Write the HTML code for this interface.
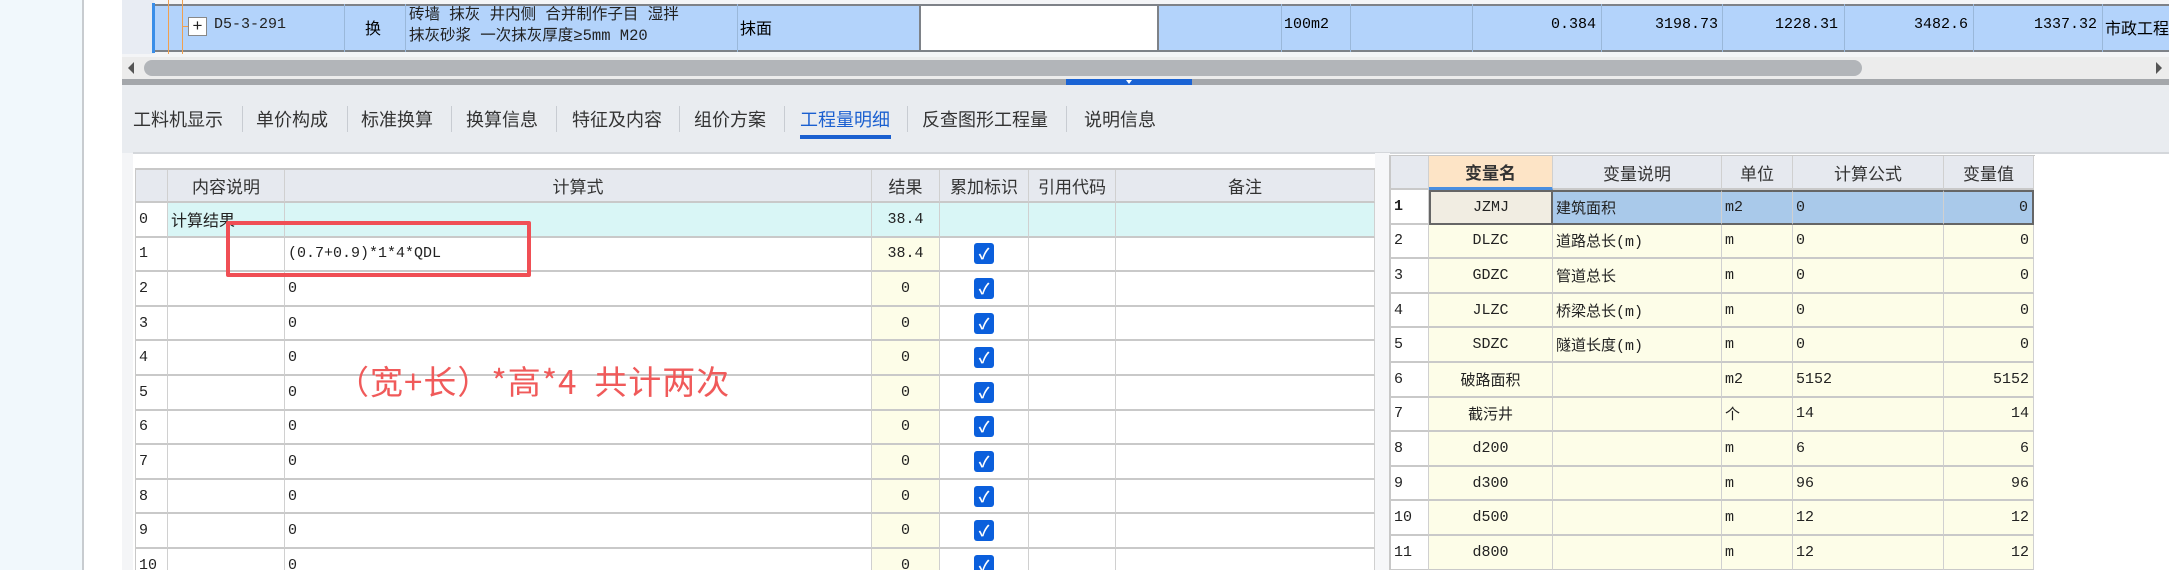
<!DOCTYPE html>
<html><head><meta charset="utf-8"><style>
*{margin:0;padding:0;box-sizing:border-box}
html{width:2169px;height:570px;overflow:hidden}
body{width:2169px;height:570px;overflow:hidden;background:#fff;position:relative;font-family:"Liberation Sans","Noto Sans CJK SC",sans-serif;}
.a{position:absolute}
.cj{font-family:"Liberation Mono","Noto Sans CJK SC",monospace;}
.wrap{position:absolute;overflow:hidden}
.grid{display:grid;position:absolute}
.grid>div{border-right:1px solid #d0d0d0;border-bottom:2px solid #c9c9c9;display:flex;align-items:center;font-size:15px;color:#222;white-space:nowrap;overflow:hidden;font-family:"Liberation Mono","Noto Sans CJK SC",monospace}
.c{justify-content:center}.r{justify-content:flex-end;padding-right:4px}.l{padding-left:3px}
.hd{background:#e6e9ef;font-family:"Liberation Sans","Noto Sans CJK SC",sans-serif!important;font-size:17px!important;color:#333!important}
.cb{width:20px;height:21px;background:#0b5fdc;border-radius:3px;color:#fff;font-size:15px;display:flex;align-items:center;justify-content:center;font-weight:bold}
.y{background:#fdfde8}
.tab{position:absolute;top:106px;font-size:18px;color:#333}
.sep{position:absolute;top:106px;width:1px;height:26px;background:#c8ccd2}
</style></head><body>
<div class="a" style="left:0;top:0;width:82px;height:570px;background:#f1f8fc"></div>
<div class="a" style="left:82px;top:0;width:2px;height:570px;background:#c8ccd0"></div>
<div class="a" style="left:122px;top:0;width:2047px;height:57px;background:#f4f5f7"></div>
<div class="a" style="left:122px;top:0;width:32px;height:54px;background:#e8ecf3"></div>
<div class="a" style="left:154px;top:4px;width:2015px;height:48px;background:#b3d3fb;border-top:2px solid #7e8288;border-bottom:2px solid #7e8288"></div>
<div class="a" style="left:152px;top:3px;width:3px;height:50px;background:#3a8ee8"></div>
<div class="a" style="left:168px;top:0;width:1px;height:54px;background:#f0a050"></div>
<div class="a" style="left:182px;top:0;width:1px;height:54px;background:#f0a050"></div>
<div class="a" style="left:182px;top:26px;width:6px;height:1px;background:#f0a050"></div>
<div class="a" style="left:188px;top:17px;width:19px;height:19px;background:#fff;border:1px solid #888;font-size:17px;line-height:16px;text-align:center;color:#222">+</div>
<div class="a cj" style="left:214px;top:16px;font-size:15px;color:#222">D5-3-291</div>
<div class="a" style="left:344px;top:4px;width:1px;height:48px;background:#9ab8da"></div>
<div class="a cj" style="left:365px;top:15px;font-size:16px">换</div>
<div class="a" style="left:405px;top:4px;width:1px;height:48px;background:#9ab8da"></div>
<div class="a cj" style="left:409px;top:5px;font-size:15.5px;line-height:21px;color:#222">砖墙 抹灰 井内侧 合并制作子目 湿拌<br>抹灰砂浆 一次抹灰厚度≥5mm M20</div>
<div class="a" style="left:737px;top:4px;width:1px;height:48px;background:#9ab8da"></div>
<div class="a cj" style="left:740px;top:15px;font-size:16px">抹面</div>
<div class="a" style="left:919px;top:6px;width:240px;height:44px;background:#fff;border-left:2px solid #7e8288;border-right:2px solid #7e8288"></div>
<div class="a" style="left:1281px;top:4px;width:1px;height:48px;background:#9ab8da"></div>
<div class="a" style="left:1350px;top:4px;width:1px;height:48px;background:#9ab8da"></div>
<div class="a" style="left:1472px;top:4px;width:1px;height:48px;background:#9ab8da"></div>
<div class="a" style="left:1601px;top:4px;width:1px;height:48px;background:#9ab8da"></div>
<div class="a" style="left:1722px;top:4px;width:1px;height:48px;background:#9ab8da"></div>
<div class="a" style="left:1844px;top:4px;width:1px;height:48px;background:#9ab8da"></div>
<div class="a" style="left:1973px;top:4px;width:1px;height:48px;background:#9ab8da"></div>
<div class="a" style="left:2102px;top:4px;width:1px;height:48px;background:#9ab8da"></div>
<div class="a cj" style="left:1284px;top:16px;font-size:15px">100m2</div>
<div class="a cj" style="left:1500px;width:96px;text-align:right;top:16px;font-size:15px">0.384</div>
<div class="a cj" style="left:1620px;width:98px;text-align:right;top:16px;font-size:15px">3198.73</div>
<div class="a cj" style="left:1740px;width:98px;text-align:right;top:16px;font-size:15px">1228.31</div>
<div class="a cj" style="left:1870px;width:98px;text-align:right;top:16px;font-size:15px">3482.6</div>
<div class="a cj" style="left:1999px;width:98px;text-align:right;top:16px;font-size:15px">1337.32</div>
<div class="a cj" style="left:2105px;top:15px;font-size:16px;white-space:nowrap">市政工程</div>
<div class="a" style="left:122px;top:57px;width:2047px;height:22px;background:#ececec"></div>
<div class="a" style="left:128px;top:62px;width:0;height:0;border-top:6px solid transparent;border-bottom:6px solid transparent;border-right:6px solid #555"></div>
<div class="a" style="left:144px;top:60px;width:1718px;height:16px;background:#b2b5b9;border-radius:8px"></div>
<div class="a" style="left:2156px;top:62px;width:0;height:0;border-top:6px solid transparent;border-bottom:6px solid transparent;border-left:6px solid #555"></div>
<div class="a" style="left:122px;top:79px;width:2047px;height:6px;background:#a4a7ab"></div>
<div class="a" style="left:1066px;top:79px;width:126px;height:6px;background:#1a63d4"></div>
<div class="a" style="left:1126px;top:80px;width:0;height:0;border-left:3px solid transparent;border-right:3px solid transparent;border-top:4px solid #fff"></div>
<div class="a" style="left:122px;top:85px;width:2047px;height:68px;background:#e9ecf0"></div>
<div class="a" style="left:122px;top:153px;width:11px;height:417px;background:#f4f5f7"></div>
<div class="a" style="left:133px;top:152px;width:2036px;height:2px;background:#d4d7db"></div>
<div class="tab" style="left:133px">工料机显示</div><div class="sep" style="left:242px"></div>
<div class="tab" style="left:256px">单价构成</div><div class="sep" style="left:347px"></div>
<div class="tab" style="left:361px">标准换算</div><div class="sep" style="left:451px"></div>
<div class="tab" style="left:466px">换算信息</div><div class="sep" style="left:556px"></div>
<div class="tab" style="left:572px">特征及内容</div><div class="sep" style="left:679px"></div>
<div class="tab" style="left:694px">组价方案</div><div class="sep" style="left:784px"></div>
<div class="tab" style="left:800px;color:#1a5fd0">工程量明细</div><div class="sep" style="left:907px"></div>
<div class="a" style="left:800px;top:135px;width:91px;height:4px;background:#1a5fd0"></div>
<div class="tab" style="left:922px">反查图形工程量</div><div class="sep" style="left:1066px"></div>
<div class="tab" style="left:1084px">说明信息</div>
<div class="wrap" style="left:135px;top:168px;width:1240px;height:402px;border-left:1px solid #c8c8c8;border-top:2px solid #c8c8c8">
<div class="grid" style="left:0;top:0;grid-template-columns:32px 117px 587px 68px 89px 87px 259px;grid-template-rows:33px repeat(11,34.6px)">
<div class="hd"></div><div class="hd c">内容说明</div><div class="hd c">计算式</div><div class="hd c">结果</div><div class="hd c">累加标识</div><div class="hd c">引用代码</div><div class="hd c">备注</div>
<div class="l">0</div><div class="l" style="background:#d9f6f6;font-family:'Noto Sans CJK SC',sans-serif;font-size:16px">计算结果</div><div style="background:#d9f6f6"></div><div class="c" style="background:#d9f6f6">38.4</div><div style="background:#d9f6f6"></div><div style="background:#d9f6f6"></div><div style="background:#d9f6f6"></div>
<div class="l">1</div><div></div><div class="l">(0.7+0.9)*1*4*QDL</div><div class="c y">38.4</div><div class="c"><span class="cb">✓</span></div><div></div><div></div>
<div class="l">2</div><div></div><div class="l">0</div><div class="c y">0</div><div class="c"><span class="cb">✓</span></div><div></div><div></div>
<div class="l">3</div><div></div><div class="l">0</div><div class="c y">0</div><div class="c"><span class="cb">✓</span></div><div></div><div></div>
<div class="l">4</div><div></div><div class="l">0</div><div class="c y">0</div><div class="c"><span class="cb">✓</span></div><div></div><div></div>
<div class="l">5</div><div></div><div class="l">0</div><div class="c y">0</div><div class="c"><span class="cb">✓</span></div><div></div><div></div>
<div class="l">6</div><div></div><div class="l">0</div><div class="c y">0</div><div class="c"><span class="cb">✓</span></div><div></div><div></div>
<div class="l">7</div><div></div><div class="l">0</div><div class="c y">0</div><div class="c"><span class="cb">✓</span></div><div></div><div></div>
<div class="l">8</div><div></div><div class="l">0</div><div class="c y">0</div><div class="c"><span class="cb">✓</span></div><div></div><div></div>
<div class="l">9</div><div></div><div class="l">0</div><div class="c y">0</div><div class="c"><span class="cb">✓</span></div><div></div><div></div>
<div class="l">10</div><div></div><div class="l">0</div><div class="c y">0</div><div class="c"><span class="cb">✓</span></div><div></div><div></div>
</div></div>
<div class="a" style="left:226px;top:221px;width:305px;height:56px;border:4px solid #f04f55;border-radius:2px"></div>
<div class="a" style="left:336px;top:356px;font-size:33px;color:#f05a5a;white-space:pre;font-family:'Noto Sans CJK SC',sans-serif;letter-spacing:1px">（宽+长）*高*4  共计两次</div>
<div class="a" style="left:1375px;top:153px;width:15px;height:417px;background:#f6f7f9"></div>
<div class="wrap" style="left:1389px;top:155px;width:646px;height:415px;border-left:2px solid #c8c8c8;border-top:1px solid #c8c8c8">
<div class="grid" style="left:0;top:0;grid-template-columns:38px 124px 169px 71px 151px 90px;grid-template-rows:34px repeat(11,34.6px)">
<div class="hd"></div><div class="hd c" style="background:#fde4c6;font-weight:bold;border-bottom:3px solid #4a8ee0">变量名</div><div class="hd c">变量说明</div><div class="hd c">单位</div><div class="hd c">计算公式</div><div class="hd c">变量值</div>
<div class="l" style="font-weight:bold">1</div><div class="c" style="background:#f1ede2;border:2px solid #666">JZMJ</div><div class="l" style="background:#a9c9ea;border-top:2px solid #666;border-bottom:2px solid #666">建筑面积</div><div class="l" style="background:#a9c9ea;border-top:2px solid #666;border-bottom:2px solid #666">m2</div><div class="l" style="background:#a9c9ea;border-top:2px solid #666;border-bottom:2px solid #666">0</div><div class="r" style="background:#a9c9ea;border:2px solid #666;border-left:none">0</div>
<div class="l">2</div><div class="c y">DLZC</div><div class="l y">道路总长(m)</div><div class="l y">m</div><div class="l y">0</div><div class="r y">0</div>
<div class="l">3</div><div class="c y">GDZC</div><div class="l y">管道总长</div><div class="l y">m</div><div class="l y">0</div><div class="r y">0</div>
<div class="l">4</div><div class="c y">JLZC</div><div class="l y">桥梁总长(m)</div><div class="l y">m</div><div class="l y">0</div><div class="r y">0</div>
<div class="l">5</div><div class="c y">SDZC</div><div class="l y">隧道长度(m)</div><div class="l y">m</div><div class="l y">0</div><div class="r y">0</div>
<div class="l">6</div><div class="c y">破路面积</div><div class="l y"></div><div class="l y">m2</div><div class="l y">5152</div><div class="r y">5152</div>
<div class="l">7</div><div class="c y">截污井</div><div class="l y"></div><div class="l y">个</div><div class="l y">14</div><div class="r y">14</div>
<div class="l">8</div><div class="c y">d200</div><div class="l y"></div><div class="l y">m</div><div class="l y">6</div><div class="r y">6</div>
<div class="l">9</div><div class="c y">d300</div><div class="l y"></div><div class="l y">m</div><div class="l y">96</div><div class="r y">96</div>
<div class="l">10</div><div class="c y">d500</div><div class="l y"></div><div class="l y">m</div><div class="l y">12</div><div class="r y">12</div>
<div class="l">11</div><div class="c y">d800</div><div class="l y"></div><div class="l y">m</div><div class="l y">12</div><div class="r y">12</div>
</div></div>
</body></html>
